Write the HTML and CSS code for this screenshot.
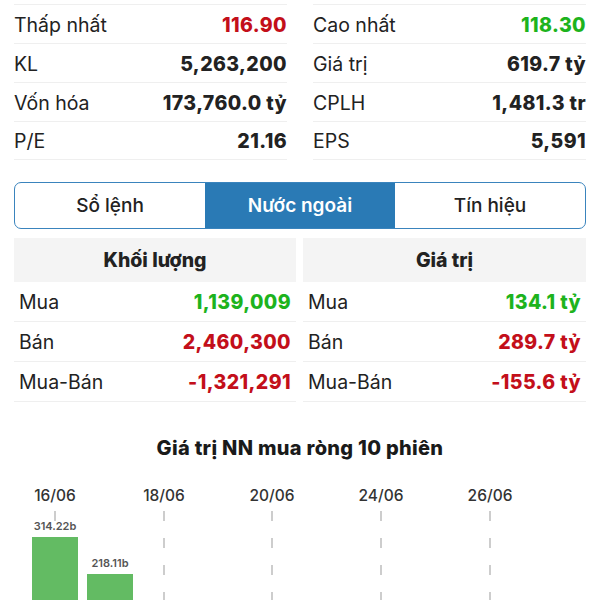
FILE: index.html
```html
<!DOCTYPE html>
<html lang="vi">
<head>
    <meta name="viewport" content="width=device-width, initial-scale=1">
    <title>Nước ngoài</title>
    <link rel="stylesheet" href="styles.css">
</head>
<body>
    <div class="stats">
        <div class="stats-col">
            <div class="stat-row"><span>Thấp nhất</span><b class="down">116.90</b></div>
            <div class="stat-row"><span>KL</span><b>5,263,200</b></div>
            <div class="stat-row"><span>Vốn hóa</span><b>173,760.0 tỷ</b></div>
            <div class="stat-row"><span>P/E</span><b>21.16</b></div>
        </div>
        <div class="stats-col">
            <div class="stat-row"><span>Cao nhất</span><b class="up">118.30</b></div>
            <div class="stat-row"><span>Giá trị</span><b>619.7 tỷ</b></div>
            <div class="stat-row"><span>CPLH</span><b>1,481.3 tr</b></div>
            <div class="stat-row"><span>EPS</span><b>5,591</b></div>
        </div>
    </div>

    <div class="tabs">
        <div class="tab">Sổ lệnh</div>
        <div class="tab active">Nước ngoài</div>
        <div class="tab">Tín hiệu</div>
    </div>

    <div class="foreign">
        <div class="foreign-col">
            <div class="foreign-head">Khối lượng</div>
            <div class="foreign-row"><span>Mua</span><b class="up">1,139,009</b></div>
            <div class="foreign-row"><span>Bán</span><b class="down">2,460,300</b></div>
            <div class="foreign-row"><span>Mua-Bán</span><b class="down">-1,321,291</b></div>
        </div>
        <div class="foreign-col">
            <div class="foreign-head">Giá trị</div>
            <div class="foreign-row"><span>Mua</span><b class="up">134.1 tỷ</b></div>
            <div class="foreign-row"><span>Bán</span><b class="down">289.7 tỷ</b></div>
            <div class="foreign-row"><span>Mua-Bán</span><b class="down">-155.6 tỷ</b></div>
        </div>
    </div>

    <div class="chart">
        <h2 class="chart-title">Giá trị NN mua ròng 10 phiên</h2>
        <svg class="chart-svg" width="600" height="130" viewBox="0 0 600 130">
            <g class="dates">
                <text x="55" y="22">16/06</text>
                <text x="164" y="22">18/06</text>
                <text x="272" y="22">20/06</text>
                <text x="381" y="22">24/06</text>
                <text x="490" y="22">26/06</text>
            </g>
            <g class="grid">
                <line x1="55" y1="32" x2="55" y2="130"/>
                <line x1="164" y1="32" x2="164" y2="130"/>
                <line x1="272" y1="32" x2="272" y2="130"/>
                <line x1="381" y1="32" x2="381" y2="130"/>
                <line x1="490" y1="32" x2="490" y2="130"/>
            </g>
            <g class="bars">
                <rect x="32" y="58" width="46" height="80"/>
                <rect x="87" y="95" width="46" height="40"/>
            </g>
            <g class="bar-labels">
                <text x="55" y="51">314.22b</text>
                <text x="110" y="88">218.11b</text>
            </g>
        </svg>
    </div>
</body>
</html>
```

FILE: styles.css
```css
body {
    font-family: Inter, "Noto Sans", sans-serif;
    margin: 0;
    padding: 0;
    background-color: #fff;
    color: #222;
    overflow: hidden;
}

.up {
    color: #1db31d;
}

.down {
    color: #c30f1a;
}

.stats {
    display: grid;
    grid-template-columns: 1fr 1fr;
    column-gap: 26px;
    padding: 4px 14px 0;
}

.stat-row {
    display: flex;
    justify-content: space-between;
    align-items: center;
    box-sizing: border-box;
    height: 39px;
    padding-top: 1px;
    border-top: 1px solid #efefef;
    font-size: 19.5px;
}

.stat-row:last-child {
    border-bottom: 1px solid #efefef;
}

.stat-row b,
.foreign-row b {
    font-weight: 800;
    letter-spacing: 0.4px;
}

.tabs {
    display: grid;
    grid-template-columns: 1fr 1fr 1fr;
    margin: 22px 14px 0;
    height: 45px;
    border: 1.5px solid #3a84bd;
    border-radius: 7px;
    overflow: hidden;
}

.tab {
    display: flex;
    justify-content: center;
    align-items: center;
    font-size: 19px;
    font-weight: 500;
    color: #222;
}

.tab.active {
    background-color: #2a7ab5;
    color: #fff;
    font-weight: 600;
}

.foreign {
    display: grid;
    grid-template-columns: 282px 1fr;
    column-gap: 7px;
    margin: 9px 14px 0;
}

.foreign-head {
    display: flex;
    justify-content: center;
    align-items: center;
    height: 44px;
    background-color: #f4f4f4;
    font-size: 19.5px;
    font-weight: 800;
}

.foreign-row {
    display: flex;
    justify-content: space-between;
    align-items: center;
    height: 39px;
    padding: 0 5px;
    border-bottom: 1px solid #efefef;
    font-size: 19.5px;
}

.chart {
    margin-top: 34px;
}

.chart-title {
    margin: 0;
    text-align: center;
    font-size: 20px;
    font-weight: 800;
    letter-spacing: 0.3px;
    color: #1a1a1a;
}

.chart-svg {
    display: block;
    margin-top: 19px;
}

.dates text {
    font-family: Inter, sans-serif;
    font-size: 15.5px;
    font-weight: 500;
    fill: #333;
    text-anchor: middle;
}

.grid line {
    stroke: #bdbdbd;
    stroke-width: 1.5;
    stroke-dasharray: 10 17;
}

.bars rect {
    fill: #63bb63;
}

.bar-labels text {
    font-family: Inter, sans-serif;
    font-size: 11px;
    font-weight: 600;
    fill: #555;
    text-anchor: middle;
}
```
